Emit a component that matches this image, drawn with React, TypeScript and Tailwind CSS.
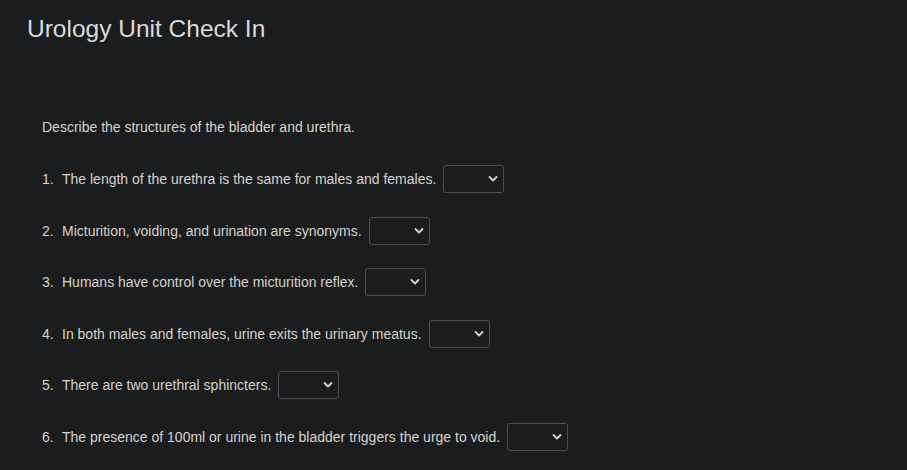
import { useState } from 'react';

const QUESTIONS = [
  'The length of the urethra is the same for males and females.',
  'Micturition, voiding, and urination are synonyms.',
  'Humans have control over the micturition reflex.',
  'In both males and females, urine exits the urinary meatus.',
  'There are two urethral sphincters.',
  'The presence of 100ml or urine in the bladder triggers the urge to void.',
];

function Dropdown() {
  const [value, setValue] = useState('');
  return (
    <div className="relative ml-[7px] h-[28px] w-[61px] shrink-0">
      <select
        value={value}
        onChange={(e) => setValue(e.target.value)}
        className="h-full w-full appearance-none rounded-[3px] border border-[#4b4f53] bg-[#1b1c1e] text-[14px] text-[#d6d3cd] outline-none"
      >
        <option value=""></option>
        <option value="true">True</option>
        <option value="false">False</option>
      </select>
      <svg
        className="pointer-events-none absolute right-[6px] top-[10px]"
        width="10"
        height="8"
        viewBox="0 0 10 8"
        fill="none"
      >
        <path d="M1.5 2 L5 5.5 L8.5 2" stroke="#d6d3cd" strokeWidth="1.8" strokeLinecap="round" strokeLinejoin="round" />
      </svg>
    </div>
  );
}

export default function App() {
  return (
    <div
      className="min-h-[470px] w-full bg-[#1b1c1e] text-[#d6d3cd]"
      style={{ fontFamily: "'Liberation Sans', Arial, sans-serif" }}
    >
      <h1 className="px-[27px] pt-[14px] text-[24.5px] leading-[29px] font-normal text-[#dadada]">
        Urology Unit Check In
      </h1>

      <div className="px-[42px] pt-[74px]">
        <p className="text-[14px] leading-[20px]">Describe the structures of the bladder and urethra.</p>

        <ol className="mt-[28px] flex flex-col gap-[23.5px]">
          {QUESTIONS.map((q, i) => (
            <li key={i} className="flex h-[28px] items-center text-[14px] leading-[20px]">
              <span className="w-[20px] shrink-0">{i + 1}.</span>
              <span>{q}</span>
              <Dropdown />
            </li>
          ))}
        </ol>
      </div>
    </div>
  );
}
